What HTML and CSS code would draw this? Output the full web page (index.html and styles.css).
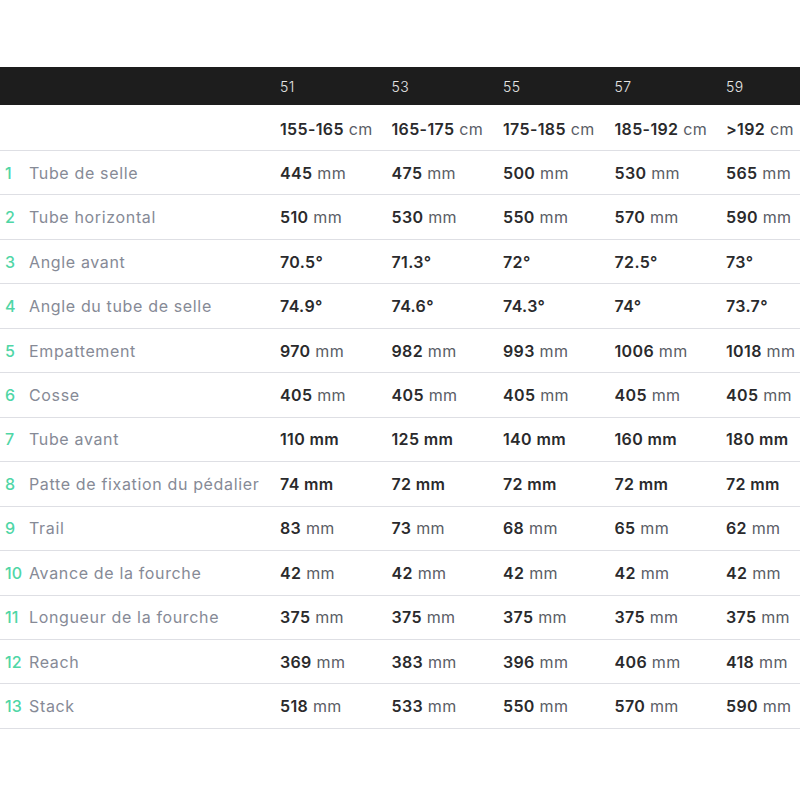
FILE: index.html
```html
<!DOCTYPE html>
<html lang="fr">
<head>
<meta charset="utf-8">
<link rel="stylesheet" href="styles.css">
</head>
<body>
<div class="table">
  <div class="row head">
    <div class="label"></div>
    <div class="cell">51</div><div class="cell">53</div><div class="cell">55</div><div class="cell">57</div><div class="cell">59</div>
  </div>
  <div class="row sub">
    <div class="label"></div>
    <div class="cell"><b>155-165</b> cm</div><div class="cell"><b>165-175</b> cm</div><div class="cell"><b>175-185</b> cm</div><div class="cell"><b>185-192</b> cm</div><div class="cell"><b>&gt;192</b> cm</div>
  </div>
  <div class="row">
    <div class="label"><span class="num">1</span>Tube de selle</div>
    <div class="cell"><b>445</b> mm</div><div class="cell"><b>475</b> mm</div><div class="cell"><b>500</b> mm</div><div class="cell"><b>530</b> mm</div><div class="cell"><b>565</b> mm</div>
  </div>
  <div class="row">
    <div class="label"><span class="num">2</span>Tube horizontal</div>
    <div class="cell"><b>510</b> mm</div><div class="cell"><b>530</b> mm</div><div class="cell"><b>550</b> mm</div><div class="cell"><b>570</b> mm</div><div class="cell"><b>590</b> mm</div>
  </div>
  <div class="row">
    <div class="label"><span class="num">3</span>Angle avant</div>
    <div class="cell"><b>70.5°</b></div><div class="cell"><b>71.3°</b></div><div class="cell"><b>72°</b></div><div class="cell"><b>72.5°</b></div><div class="cell"><b>73°</b></div>
  </div>
  <div class="row">
    <div class="label"><span class="num">4</span>Angle du tube de selle</div>
    <div class="cell"><b>74.9°</b></div><div class="cell"><b>74.6°</b></div><div class="cell"><b>74.3°</b></div><div class="cell"><b>74°</b></div><div class="cell"><b>73.7°</b></div>
  </div>
  <div class="row">
    <div class="label"><span class="num">5</span>Empattement</div>
    <div class="cell"><b>970</b> mm</div><div class="cell"><b>982</b> mm</div><div class="cell"><b>993</b> mm</div><div class="cell"><b>1006</b> mm</div><div class="cell"><b>1018</b> mm</div>
  </div>
  <div class="row">
    <div class="label"><span class="num">6</span>Cosse</div>
    <div class="cell"><b>405</b> mm</div><div class="cell"><b>405</b> mm</div><div class="cell"><b>405</b> mm</div><div class="cell"><b>405</b> mm</div><div class="cell"><b>405</b> mm</div>
  </div>
  <div class="row">
    <div class="label"><span class="num">7</span>Tube avant</div>
    <div class="cell"><b>110 mm</b></div><div class="cell"><b>125 mm</b></div><div class="cell"><b>140 mm</b></div><div class="cell"><b>160 mm</b></div><div class="cell"><b>180 mm</b></div>
  </div>
  <div class="row">
    <div class="label"><span class="num">8</span>Patte de fixation du pédalier</div>
    <div class="cell"><b>74 mm</b></div><div class="cell"><b>72 mm</b></div><div class="cell"><b>72 mm</b></div><div class="cell"><b>72 mm</b></div><div class="cell"><b>72 mm</b></div>
  </div>
  <div class="row">
    <div class="label"><span class="num">9</span>Trail</div>
    <div class="cell"><b>83</b> mm</div><div class="cell"><b>73</b> mm</div><div class="cell"><b>68</b> mm</div><div class="cell"><b>65</b> mm</div><div class="cell"><b>62</b> mm</div>
  </div>
  <div class="row">
    <div class="label"><span class="num">10</span>Avance de la fourche</div>
    <div class="cell"><b>42</b> mm</div><div class="cell"><b>42</b> mm</div><div class="cell"><b>42</b> mm</div><div class="cell"><b>42</b> mm</div><div class="cell"><b>42</b> mm</div>
  </div>
  <div class="row">
    <div class="label"><span class="num">11</span>Longueur de la fourche</div>
    <div class="cell"><b>375</b> mm</div><div class="cell"><b>375</b> mm</div><div class="cell"><b>375</b> mm</div><div class="cell"><b>375</b> mm</div><div class="cell"><b>375</b> mm</div>
  </div>
  <div class="row">
    <div class="label"><span class="num">12</span>Reach</div>
    <div class="cell"><b>369</b> mm</div><div class="cell"><b>383</b> mm</div><div class="cell"><b>396</b> mm</div><div class="cell"><b>406</b> mm</div><div class="cell"><b>418</b> mm</div>
  </div>
  <div class="row">
    <div class="label"><span class="num">13</span>Stack</div>
    <div class="cell"><b>518</b> mm</div><div class="cell"><b>533</b> mm</div><div class="cell"><b>550</b> mm</div><div class="cell"><b>570</b> mm</div><div class="cell"><b>590</b> mm</div>
  </div>
</div>
</body>
</html>
```
FILE: styles.css
```css
html, body {
  margin: 0;
  padding: 0;
  background: #ffffff;
  overflow: hidden;
}
body {
  padding-top: 67px;
  font-family: Inter, "Noto Sans", "Liberation Sans", sans-serif;
  font-size: 16px;
  color: #5a5d66;
}
.table {
  width: 840px;
}
.row {
  display: grid;
  grid-template-columns: 280px repeat(5, 111.5px);
  align-items: center;
  height: 44.46px;
  box-sizing: border-box;
  border-bottom: 1px solid #dedfe4;
  white-space: nowrap;
}
.row.head {
  height: 38px;
  background: #1d1d1d;
  color: #e6e6e6;
  font-size: 14px;
  font-weight: 300;
  letter-spacing: 0.2px;
  border-bottom: none;
}
.row.sub {
  height: 46px;
  padding-top: 2px;
}
.cell {
  letter-spacing: 0.35px;
}
.label {
  display: flex;
  align-items: baseline;
  padding-left: 5px;
  color: #868a96;
  letter-spacing: 0.65px;
}
.num {
  width: 24px;
  color: #4fd6a6;
  font-weight: 500;
  letter-spacing: 0;
}
.cell b {
  font-weight: 600;
  color: #2a2a2c;
}
```
